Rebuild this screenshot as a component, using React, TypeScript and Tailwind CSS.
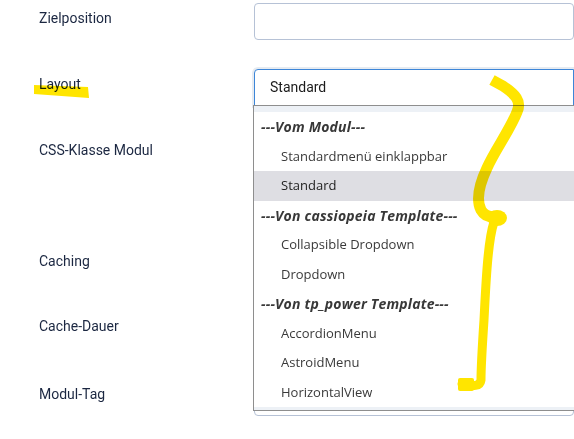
const options: { label: string; group?: boolean; selected?: boolean }[] = [
  { label: '---Vom Modul---', group: true },
  { label: 'Standardmenü einklappbar' },
  { label: 'Standard', selected: true },
  { label: '---Von cassiopeia Template---', group: true },
  { label: 'Collapsible Dropdown' },
  { label: 'Dropdown' },
  { label: '---Von tp_power Template---', group: true },
  { label: 'AccordionMenu' },
  { label: 'AstroidMenu' },
  { label: 'HorizontalView' },
]

function Label({ children }: { children: React.ReactNode }) {
  return (
    <div className="w-[254px] shrink-0 pl-[39px] pt-[5px] text-[14px] leading-[20px] text-[#1b2741]">
      {children}
    </div>
  )
}

function TextField() {
  return <div className="h-[37px] w-[340px] rounded-[4px] border border-[#b6c2d6] bg-white" />
}

function LayoutSelect() {
  return (
    <div className="relative w-[340px]">
      <div className="flex h-[37px] items-center rounded-tl-[4px] border border-[#3d86d8] bg-white pl-[15px] text-[14px] text-[#1b1b1b] shadow-[0_0_0_2px_#e6ebf1]">
        Standard
      </div>
      {/* native option list, open */}
      <div
        className="absolute left-[-1px] right-0 top-[36px] z-10 border-l border-t border-b border-[#8e8e8e] bg-white pt-[6px] pb-[3px] text-[13px] text-[#3a3a3a]"
        style={{ fontFamily: '"Open Sans", sans-serif' }}
      >
        <div className="absolute inset-x-0 top-0 h-[6px] bg-[#edf1f6]" />
        <div className="absolute inset-x-0 bottom-0 h-[3px] bg-[#edf1f6]" />
        {options.map((o) => (
          <div
            key={o.label}
            className={
              'flex h-[29.5px] items-center ' +
              (o.group
                ? 'pl-[7px] text-[14px] font-bold italic tracking-[0.2px] text-[#383838]'
                : 'pl-[27px]') +
              (o.selected ? ' bg-[#dedee3] text-[#222]' : '')
            }
          >
            {o.label}
          </div>
        ))}
      </div>
    </div>
  )
}

function Marker() {
  return (
    <svg
      className="pointer-events-none absolute inset-0 z-20 mix-blend-multiply"
      width="574"
      height="439"
      viewBox="0 0 574 439"
    >
      <polygon points="34,85 88,87 89,98 34,94" fill="#ffe500" />
      <g fill="none" stroke="#ffe500" strokeLinejoin="round">
        <path
          d="M492 80 L503 86 C515 94 522 101 517 112 C510 130 495 150 487 168 C479 185 476 200 481 210 C485 217 492 218 500 216"
          strokeWidth="11"
        />
        <path
          d="M494 222 C488 240 486 280 484 320 C482 350 481 370 481 380 C480 387 474 386 462 384"
          strokeWidth="9"
          strokeLinecap="round"
        />
      </g>
      <ellipse cx="497" cy="218" rx="10" ry="8" fill="#ffe500" />
      <rect x="458" y="378" width="16" height="13" rx="2" fill="#ffe500" />
    </svg>
  )
}

export default function App() {
  return (
    <div
      className="relative h-[439px] w-[574px] overflow-hidden bg-white"
      style={{ fontFamily: 'Roboto, sans-serif' }}
    >
      <div className="flex flex-col pt-[3px]">
        <div className="flex h-[37px]">
          <Label>Zielposition</Label>
          <TextField />
        </div>
        <div className="mt-[29px] flex h-[37px]">
          <Label>Layout</Label>
          <LayoutSelect />
        </div>
        <div className="mt-[29px] flex h-[81px]">
          <Label>CSS-Klasse Modul</Label>
          <TextField />
        </div>
        <div className="mt-[30px] flex h-[37px]">
          <Label>Caching</Label>
          <TextField />
        </div>
        <div className="mt-[28px] flex h-[37px]">
          <Label>Cache-Dauer</Label>
          <TextField />
        </div>
        <div className="mt-[31px] flex h-[37px]">
          <Label>Modul-Tag</Label>
          <TextField />
        </div>
      </div>
      <Marker />
    </div>
  )
}
